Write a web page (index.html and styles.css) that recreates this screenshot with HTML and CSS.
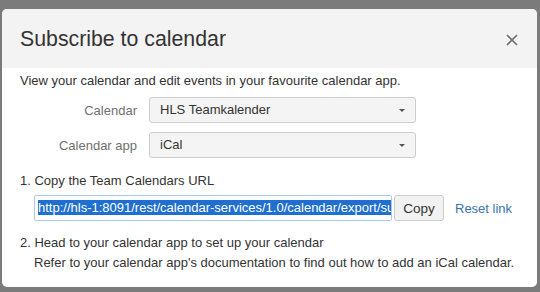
FILE: index.html
```html
<!DOCTYPE html>
<html lang="en">
<head>
  <meta charset="UTF-8" />
  <title>Subscribe to calendar</title>
  <link rel="stylesheet" href="styles.css">
</head>
<body>
  <div class="dialog">
    <div class="dialog-header">
      <h2>Subscribe to calendar</h2>
      <svg class="close" width="12" height="12" viewBox="0 0 12 12">
        <path d="M1 1 L11 11 M11 1 L1 11" stroke="#707070" stroke-width="1.6" fill="none"/>
      </svg>
    </div>
    <div class="dialog-body">
      <p class="intro">View your calendar and edit events in your favourite calendar app.</p>
      <div class="form-row">
        <label>Calendar</label>
        <div class="select">HLS Teamkalender<span class="caret"></span></div>
      </div>
      <div class="form-row">
        <label>Calendar app</label>
        <div class="select">iCal<span class="caret"></span></div>
      </div>
      <p class="step step-one">1. Copy the Team Calendars URL</p>
      <div class="url-row">
        <div class="url-input"><span class="selected">http://hls-1:8091/rest/calendar-services/1.0/calendar/export/subscribe</span></div>
        <button class="copy-btn">Copy</button>
        <a href="#" class="reset-link">Reset link</a>
      </div>
      <p class="step">2. Head to your calendar app to set up your calendar</p>
      <p class="step indent">Refer to your calendar app's documentation to find out how to add an iCal calendar.</p>
    </div>
  </div>
</body>
</html>
```

FILE: styles.css
```css
* {
  margin: 0;
  padding: 0;
  box-sizing: border-box;
  font-family: "Liberation Sans", Arial, sans-serif;
}
body {
  background: #7b7b7b;
  height: 292px;
  overflow: hidden;
}
.dialog {
  margin: 9px 3px 0 2px;
  background: #fff;
  border-radius: 5px;
  overflow: hidden;
  height: 278px;
  color: #333;
}
.dialog-header {
  background: #f3f3f3;
  height: 59px;
  display: flex;
  align-items: center;
  justify-content: space-between;
  padding: 2px 19px 0 18px;
}
.dialog-header h2 {
  font-weight: normal;
  font-size: 21.3px;
  color: #333;
}
.dialog-body {
  padding: 3px 18px 0 18px;
  font-size: 13px;
}
.intro {
  line-height: 20px;
  margin-bottom: 6px;
}
.form-row {
  display: flex;
  align-items: center;
  margin-bottom: 9px;
}
.form-row label {
  width: 117px;
  text-align: right;
  color: #707070;
  margin-right: 12px;
}
.select {
  width: 267px;
  height: 26px;
  border: 1px solid #ccc;
  border-radius: 3px;
  background: #f4f4f4;
  padding: 0 10px;
  line-height: 24px;
  position: relative;
}
.caret {
  position: absolute;
  right: 10px;
  top: 11px;
  border-left: 3.5px solid transparent;
  border-right: 3.5px solid transparent;
  border-top: 3.5px solid #555;
}
.step {
  line-height: 20px;
  white-space: nowrap;
}
.step-one {
  margin-top: 13px;
}
.url-row {
  display: flex;
  align-items: center;
  margin: 4px 0 12px 14px;
}
.url-input {
  width: 358px;
  height: 26px;
  border: 1px solid #a9cbe8;
  border-radius: 2px;
  padding: 0 3px;
  line-height: 24px;
  overflow: hidden;
  white-space: nowrap;
}
.selected {
  background: #1f6fd0;
  color: #fff;
}
.copy-btn {
  height: 26px;
  width: 50px;
  margin-left: 2px;
  border: 1px solid #ccc;
  border-radius: 3px;
  background: #f2f2f2;
  color: #333;
  font-size: 13.5px;
}
.reset-link {
  margin-left: 11px;
  color: #3b73af;
  text-decoration: none;
}
.indent {
  padding-left: 14px;
}
```
